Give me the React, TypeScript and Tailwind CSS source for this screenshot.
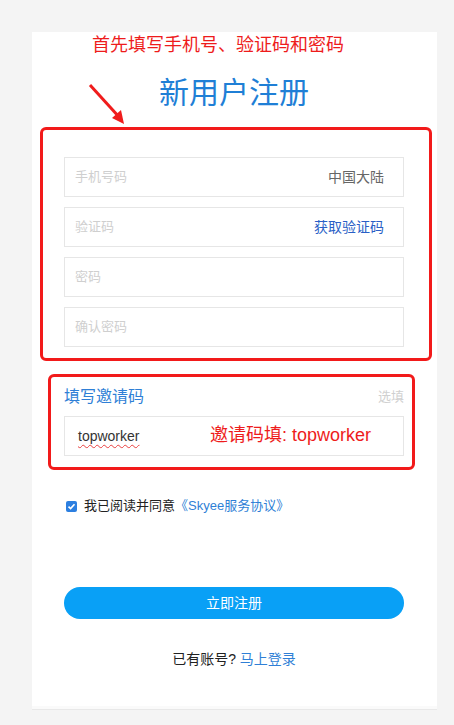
export default function App() {
  return (
    <div
      className="min-h-[725px] bg-[#f4f4f4] pt-[32px]"
      style={{ fontFamily: '"Liberation Sans", "Noto Sans CJK SC", sans-serif' }}
    >
      <div className="relative mx-[32px] h-[674px] w-[405px] bg-white pl-[32px] pr-[33px]">
        {/* annotation arrow */}
        <svg
          className="absolute left-[54px] top-[50px]"
          width="44"
          height="46"
          viewBox="0 0 44 46"
        >
          <line x1="4" y1="3" x2="34" y2="36" stroke="#f01c1c" strokeWidth="3" />
          <polygon points="38,42 26,36 35,28" fill="#f01c1c" />
        </svg>

        <p className="ml-[28px] pt-[2px] text-[18px] leading-[22px] text-[#ee1c1c]">
          首先填写手机号、验证码和密码
        </p>
        <h1 className="mt-[17px] text-center text-[30px] leading-[40px] text-[#1f7fd6]">
          新用户注册
        </h1>

        <div className="-ml-[24px] -mr-[28px] mt-[14px] rounded-[6px] border-[3px] border-[#f21a1a] pb-[11px] pl-[21px] pr-[25px] pt-[27px]">
          <div className="flex flex-col gap-[10px]">
            <Field placeholder="手机号码">
              <span className="text-[14px] text-[#666]">中国大陆</span>
            </Field>
            <Field placeholder="验证码">
              <span className="text-[14px] text-[#2a5fc6]">获取验证码</span>
            </Field>
            <Field placeholder="密码" />
            <Field placeholder="确认密码" />
          </div>
        </div>

        <div className="-ml-[16px] -mr-[11px] mt-[13px] rounded-[6px] border-[3px] border-[#f21a1a] pb-[11px] pl-[13px] pr-[8px] pt-[9px]">
          <div className="flex items-center justify-between">
            <span className="text-[16px] leading-[22px] text-[#2f7fd6]">填写邀请码</span>
            <span className="text-[13px] text-[#d0d0d0]">选填</span>
          </div>
          <div className="relative mt-[8px] flex h-[40px] items-center border border-[#e6e6e6] px-[13px]">
            <span className="text-[14px] text-[#333] underline decoration-[#e84040] decoration-wavy decoration-1 underline-offset-[3px]">
              topworker
            </span>
            <span className="absolute left-[145px] top-[5px] text-[18px] text-[#ee1c1c]">
              邀请码填: topworker
            </span>
          </div>
        </div>

        <div className="mt-[26px] flex h-[20px] items-center pl-[2px] text-[13px]">
          <span className="mr-[7px] flex h-[11px] w-[11px] items-center justify-center rounded-[2px] bg-[#2c7fe0]">
            <svg width="9" height="9" viewBox="0 0 9 9">
              <path d="M1.5 4.6 L3.6 6.6 L7.5 2.2" fill="none" stroke="white" strokeWidth="1.6" />
            </svg>
          </span>
          <span className="text-[#222]">我已阅读并同意</span>
          <span className="text-[#2f7fd6]">《Skyee服务协议》</span>
        </div>

        <button className="mt-[71px] block h-[32px] w-full rounded-full bg-[#09a0f6] text-[14px] text-white">
          立即注册
        </button>

        <p className="mt-[30px] text-center text-[14px] leading-[20px] text-[#222]">
          已有账号? <span className="text-[#2f7fd6]">马上登录</span>
        </p>
      </div>
      <div className="mx-[32px] h-[4px] w-[405px] border-b border-[#e8e8e8] bg-[#fafafa]" />
    </div>
  );
}

function Field({ placeholder, children }: { placeholder: string; children?: React.ReactNode }) {
  return (
    <div className="flex h-[40px] items-center justify-between border border-[#e6e6e6] pl-[10px] pr-[19px]">
      <span className="text-[13px] text-[#cfcfcf]">{placeholder}</span>
      {children}
    </div>
  );
}
